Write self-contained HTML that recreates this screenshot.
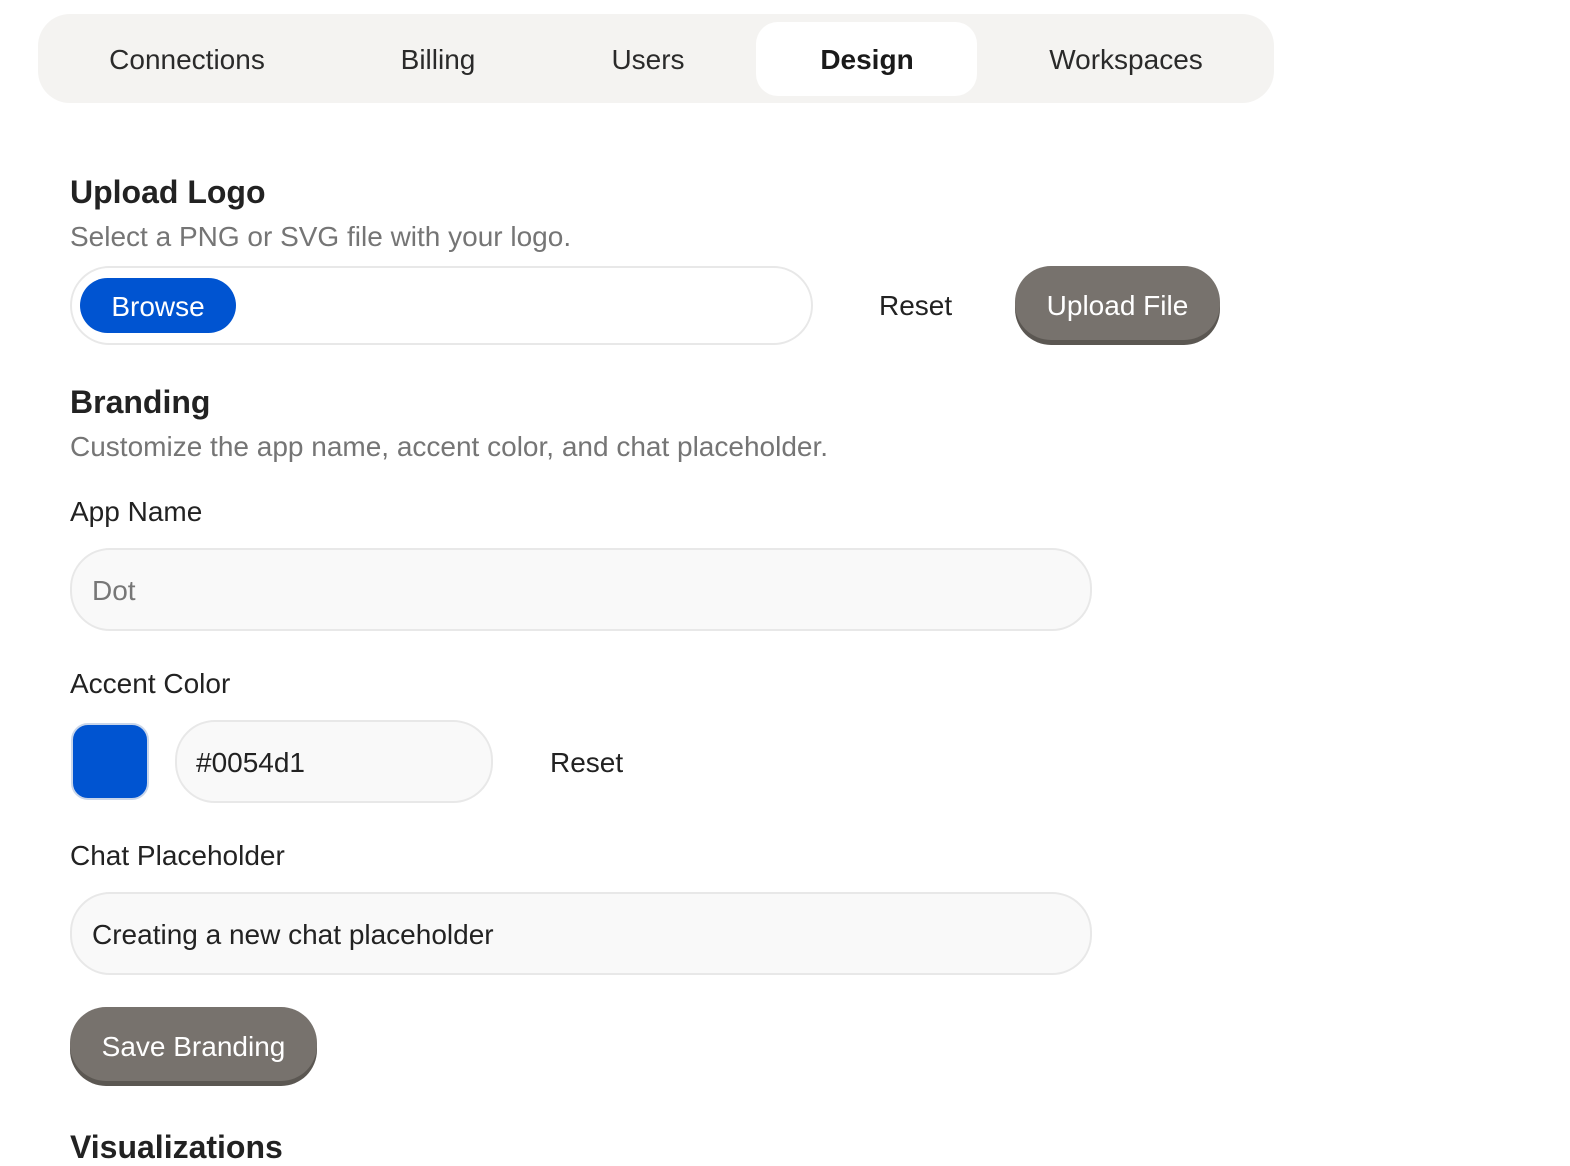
<!DOCTYPE html>
<html><head><meta charset="utf-8"><style>
*{margin:0;padding:0;box-sizing:border-box}
body{width:1570px;height:1150px;background:#fff;font-family:"Liberation Sans",Arial,sans-serif;color:#222;position:relative;overflow:hidden}
.a{position:absolute;white-space:nowrap}
.tabs{left:38px;top:14px;width:1236px;height:89px;background:#f4f3f1;border-radius:32px}
.tab{top:15px;height:89px;line-height:89px;font-size:28px;color:#2a2a2a;transform:translateX(-50%)}
.act{left:756px;top:22px;width:221px;height:74px;background:#fff;border-radius:22px}
h2{font-size:32px;font-weight:bold;color:#222}
.sub{font-size:28px;color:#757575}
.lbl{font-size:28px;color:#222}
.inp{background:#f9f9f9;border:2px solid #e8e8e8;border-radius:40px}
.btn{background:#77726d;color:#fff;border-radius:36px;box-shadow:0 5px 0 #5b5752;font-size:28px;text-align:center}
</style></head><body>
<div class="a tabs"></div>
<div class="a act"></div>
<div class="a tab" style="left:187px">Connections</div>
<div class="a tab" style="left:438px">Billing</div>
<div class="a tab" style="left:648px">Users</div>
<div class="a tab" style="left:867px;font-weight:bold;color:#1a1a1a">Design</div>
<div class="a tab" style="left:1126px">Workspaces</div>

<h2 class="a" style="left:70px;top:174px">Upload Logo</h2>
<div class="a sub" style="left:70px;top:221px">Select a PNG or SVG file with your logo.</div>
<div class="a" style="left:70px;top:266px;width:743px;height:79px;border:2px solid #e8e8e8;border-radius:40px;background:#fff"></div>
<div class="a" style="left:80px;top:278px;width:156px;height:55px;background:#0054d1;border-radius:28px;color:#fff;font-size:28px;line-height:57px;text-align:center">Browse</div>
<div class="a" style="left:879px;top:290px;font-size:28px">Reset</div>
<div class="a btn" style="left:1015px;top:266px;width:205px;height:74px;line-height:80px">Upload File</div>

<h2 class="a" style="left:70px;top:384px">Branding</h2>
<div class="a sub" style="left:70px;top:431px">Customize the app name, accent color, and chat placeholder.</div>
<div class="a lbl" style="left:70px;top:496px">App Name</div>
<div class="a inp" style="left:70px;top:548px;width:1022px;height:83px"></div>
<div class="a" style="left:92px;top:575px;font-size:28px;color:#777">Dot</div>

<div class="a lbl" style="left:70px;top:668px">Accent Color</div>
<div class="a" style="left:71px;top:723px;width:78px;height:77px;background:#0054d1;border-radius:17px;border:2px solid #c9d6ea"></div>
<div class="a inp" style="left:175px;top:720px;width:318px;height:83px"></div>
<div class="a" style="left:196px;top:747px;font-size:28px;color:#222">#0054d1</div>
<div class="a" style="left:550px;top:747px;font-size:28px">Reset</div>

<div class="a lbl" style="left:70px;top:840px">Chat Placeholder</div>
<div class="a inp" style="left:70px;top:892px;width:1022px;height:83px"></div>
<div class="a" style="left:92px;top:919px;font-size:28px;color:#222">Creating a new chat placeholder</div>

<div class="a btn" style="left:70px;top:1007px;width:247px;height:74px;line-height:80px">Save Branding</div>
<h2 class="a" style="left:70px;top:1129px">Visualizations</h2>
</body></html>
